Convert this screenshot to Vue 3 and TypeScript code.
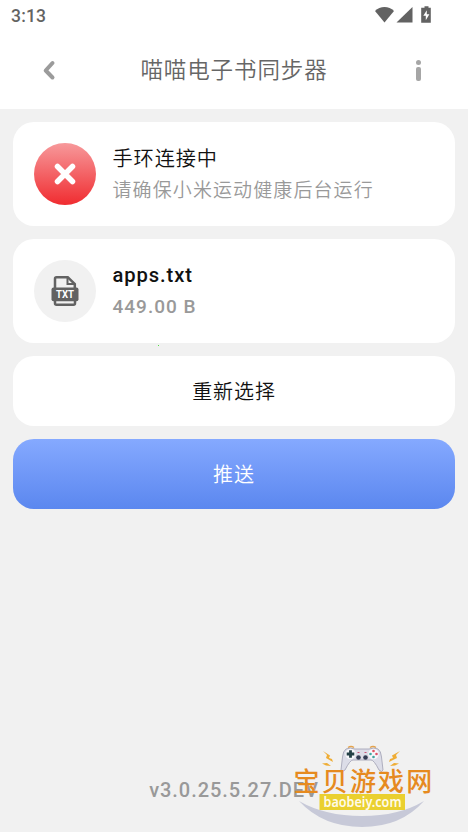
<script setup lang="ts">
interface Details {
  title: string
  detail: string
}

const time = '3:13'
const appTitle = '喵喵电子书同步器'
const device: Details = { title: '手环连接中', detail: '请确保小米运动健康后台运行' }
const file: Details = { title: 'apps.txt', detail: '449.00 B' }
const version = 'v3.0.25.5.27.DEV'
</script>

<template>
  <div class="screen">
    <header class="header">
      <div class="status">
        <span class="clock">{{ time }}</span>
        <svg class="status-icons" width="60" height="18" viewBox="0 0 60 18">
          <path d="M0 5C5-.2 14-.2 19 5L9.500 16.500Z" />
          <path d="M37.500 1v15.500H21.500Z" />
          <path d="M49.500.2h4v1.500h2.300v15h-9.600v-15h3.300Z" />
          <path class="bolt" d="M51.800 4.200 48.300 9.800h2.500v4.500l3.600-6h-2.600Z" />
        </svg>
      </div>
      <div class="titlebar">
        <button class="nav" aria-label="返回">
          <svg width="14" height="22" viewBox="0 0 14 22">
            <path d="M10.500 4 3.700 11.500l6.800 7" fill="none" stroke="#9b9b9b" stroke-width="4" stroke-linecap="round" stroke-linejoin="round" />
          </svg>
        </button>
        <h1>{{ appTitle }}</h1>
        <button class="nav" aria-label="信息">
          <svg width="6" height="22" viewBox="0 0 6 22">
            <circle cx="2.500" cy="3.500" r="2.500" fill="#a6a6a6" />
            <rect x="0" y="8" width="5" height="14" rx="2" fill="#a6a6a6" />
          </svg>
        </button>
      </div>
    </header>

    <main class="content">
      <section class="card">
        <div class="badge badge-error">
          <svg width="24" height="24" viewBox="0 0 24 24">
            <path d="m4.500 4.500 15 15m0-15-15 15" stroke="#fff" stroke-width="5.500" stroke-linecap="round" />
          </svg>
        </div>
        <div class="info info-cjk">
          <div class="name cjk">{{ device.title }}</div>
          <div class="detail cjk">{{ device.detail }}</div>
        </div>
      </section>

      <section class="card">
        <div class="badge badge-file">
          <svg width="28" height="32" viewBox="0 0 28 32">
            <path d="M4 13V3.800Q4 2.200 5.500 2.200h11.300L23.800 9V13M4 25v3.300Q4 29.800 5.500 29.800h17q1.500 0 1.500-1.500V25" fill="none" stroke="#626262" stroke-width="2.500" />
            <path d="M16.500 2v7h7" fill="none" stroke="#626262" stroke-width="2" />
            <rect x=".5" y="12.500" width="27" height="13.800" rx="2" fill="#626262" />
            <text x="14" y="23" text-anchor="middle" textLength="18" lengthAdjust="spacingAndGlyphs" class="file-type">TXT</text>
          </svg>
        </div>
        <div class="info">
          <div class="name latin">{{ file.title }}</div>
          <div class="detail latin">{{ file.detail }}</div>
        </div>
      </section>

      <button class="action">重新选择</button>
      <button class="action primary">推送</button>
    </main>

    <i class="speck"></i>
    <footer class="version">{{ version }}</footer>

    <svg class="watermark" width="150" height="92" viewBox="290 740 150 92">
      <path d="M299 801Q325 816 362 816T424 801Q401 827 362 827T299 801Z" fill="#c7c9d8" />
      <g fill="#efad35">
        <path d="m323 751 7 4.500-1 2.500 3 1 1 3-7-4 1-3Z" />
        <path d="m400 751-8 4.500 1 2.500-3 1-1 3 8-4-1-3Z" />
        <path d="m322 763.500 5-.5 4 3-5-.5Zm77 0-5-.5-4 3 5-.5Z" />
      </g>
      <path d="M348 747.500q3-2 6 0M370 747.500q3-2 6 0" fill="none" stroke="#e4a34e" stroke-width="1.500" />
      <path d="M346 749q4-2 9 0h14q5-2 9 0 3 2 3.500 8l1.500 13q-1 3-4 0-5-10-8-10h-18q-3 0-8 10-3 3-4 0l1.500-13q.5-6 3.500-8Z" fill="#dcdde8" stroke="#9fa0b3" stroke-width=".8" />
      <circle cx="350.500" cy="754" r="5.200" fill="#f7f7fb" />
      <circle cx="373.500" cy="754" r="5.200" fill="#f7f7fb" />
      <path d="M350.500 750.200v7.600m-3.800-3.800h7.600" stroke="#244147" stroke-width="2.800" />
      <g fill="#333d54"><circle cx="358.500" cy="757.500" r="2.300" /><circle cx="365.500" cy="757.500" r="2.300" /></g>
      <path d="M357.500 752.500h2m5 0h2" stroke="#c45678" />
      <circle cx="373.500" cy="751" r="1.300" fill="#de5460" />
      <circle cx="373.500" cy="757" r="1.300" fill="#40a39c" />
      <circle cx="370.500" cy="754" r="1.300" fill="#41a7a0" />
      <circle cx="376.500" cy="754" r="1.300" fill="#df5368" />
      <text x="293.500" y="790.500" class="brand">宝贝游戏网</text>
      <rect x="319.500" y="794" width="85.500" height="16" fill="#ead02f" />
      <text x="323.500" y="806.500" textLength="78" lengthAdjust="spacingAndGlyphs" class="domain">baobeiy.com</text>
    </svg>
  </div>
</template>

<style>
body {
  background: #f1f1f1;
}
</style>

<style scoped>
.screen {
  position: relative;
  display: flex;
  flex-direction: column;
  box-sizing: border-box;
  height: 832px;
  overflow: hidden;
  background: #f1f1f1;
  font-family: Roboto, "Noto Sans CJK SC", sans-serif;
}
.header {
  height: 109px;
  flex: none;
  background: #fff;
}
.status {
  display: flex;
  align-items: center;
  justify-content: space-between;
  height: 32px;
  padding: 0 32px 0 11px;
}
.clock {
  color: #636363;
  font-size: 17.500px;
  font-weight: 500;
  letter-spacing: .2px;
}
.status-icons {
  fill: #626262;
  margin-right: 1px;
  margin-bottom: 2px;
}
.bolt {
  fill: #fff;
}
.titlebar {
  display: grid;
  grid-template-columns: 34px 1fr 34px;
  align-items: center;
  height: 76px;
  padding: 0 32px;
}
.nav {
  display: flex;
  align-items: center;
  justify-content: center;
  padding: 0;
  border: 0;
  background: none;
}
h1 {
  margin: 0;
  color: #666;
  font-size: 22.500px;
  line-height: 32px;
  font-weight: 350;
  letter-spacing: .9px;
  text-align: center;
}
.content {
  display: flex;
  flex-direction: column;
  gap: 13px;
  padding: 13px 13px 0;
}
.card {
  display: flex;
  align-items: center;
  gap: 16.500px;
  box-sizing: border-box;
  height: 104px;
  padding: 0 21px;
  border-radius: 21px;
  background: #fff;
}
.badge {
  display: flex;
  align-items: center;
  justify-content: center;
  flex: none;
  width: 62px;
  height: 62px;
  border-radius: 50%;
}
.badge-error {
  background: linear-gradient(#f7999b, #f02c30);
}
.badge-file {
  background: #f1f1f1;
}
.file-type {
  fill: #fff;
  font: 700 10px Roboto, sans-serif;
}
.info-cjk {
  padding-top: 2px;
}
.name,
.detail {
  height: 31px;
  line-height: 31px;
  white-space: nowrap;
}
.name {
  color: #111;
  font-size: 20.200px;
  letter-spacing: .9px;
}
.detail {
  color: #999;
  font-size: 19px;
  letter-spacing: 1.100px;
}
.name.latin,
.detail.latin {
  font-weight: 500;
}
.detail.latin {
  letter-spacing: 1px;
}
.name.cjk,
.detail.cjk {
  font-weight: 350;
}
.action {
  height: 70px;
  padding: 0 0 2px;
  border: 0;
  border-radius: 21px;
  background: #fff;
  color: #111;
  font-family: inherit;
  font-size: 20px;
  font-weight: 350;
  letter-spacing: .9px;
}
.action.primary {
  background: linear-gradient(#85a9ff, #5b87ef);
  color: #fff;
}
.speck {
  position: absolute;
  left: 158px;
  top: 345px;
  width: 1px;
  height: 1px;
  background: #55df44;
}
.version {
  margin-top: auto;
  margin-bottom: 29px;
  height: 26px;
  line-height: 26px;
  color: #999;
  font-size: 20px;
  font-weight: 500;
  letter-spacing: .95px;
  text-align: center;
}
.watermark {
  position: absolute;
  left: 290px;
  top: 740px;
}
.brand {
  fill: #e68a1f;
  font: 500 26px "Noto Sans CJK SC", sans-serif;
  letter-spacing: 2.200px;
}
.domain {
  fill: #fffbe9;
  font: 600 14px "Noto Sans", sans-serif;
}
</style>
